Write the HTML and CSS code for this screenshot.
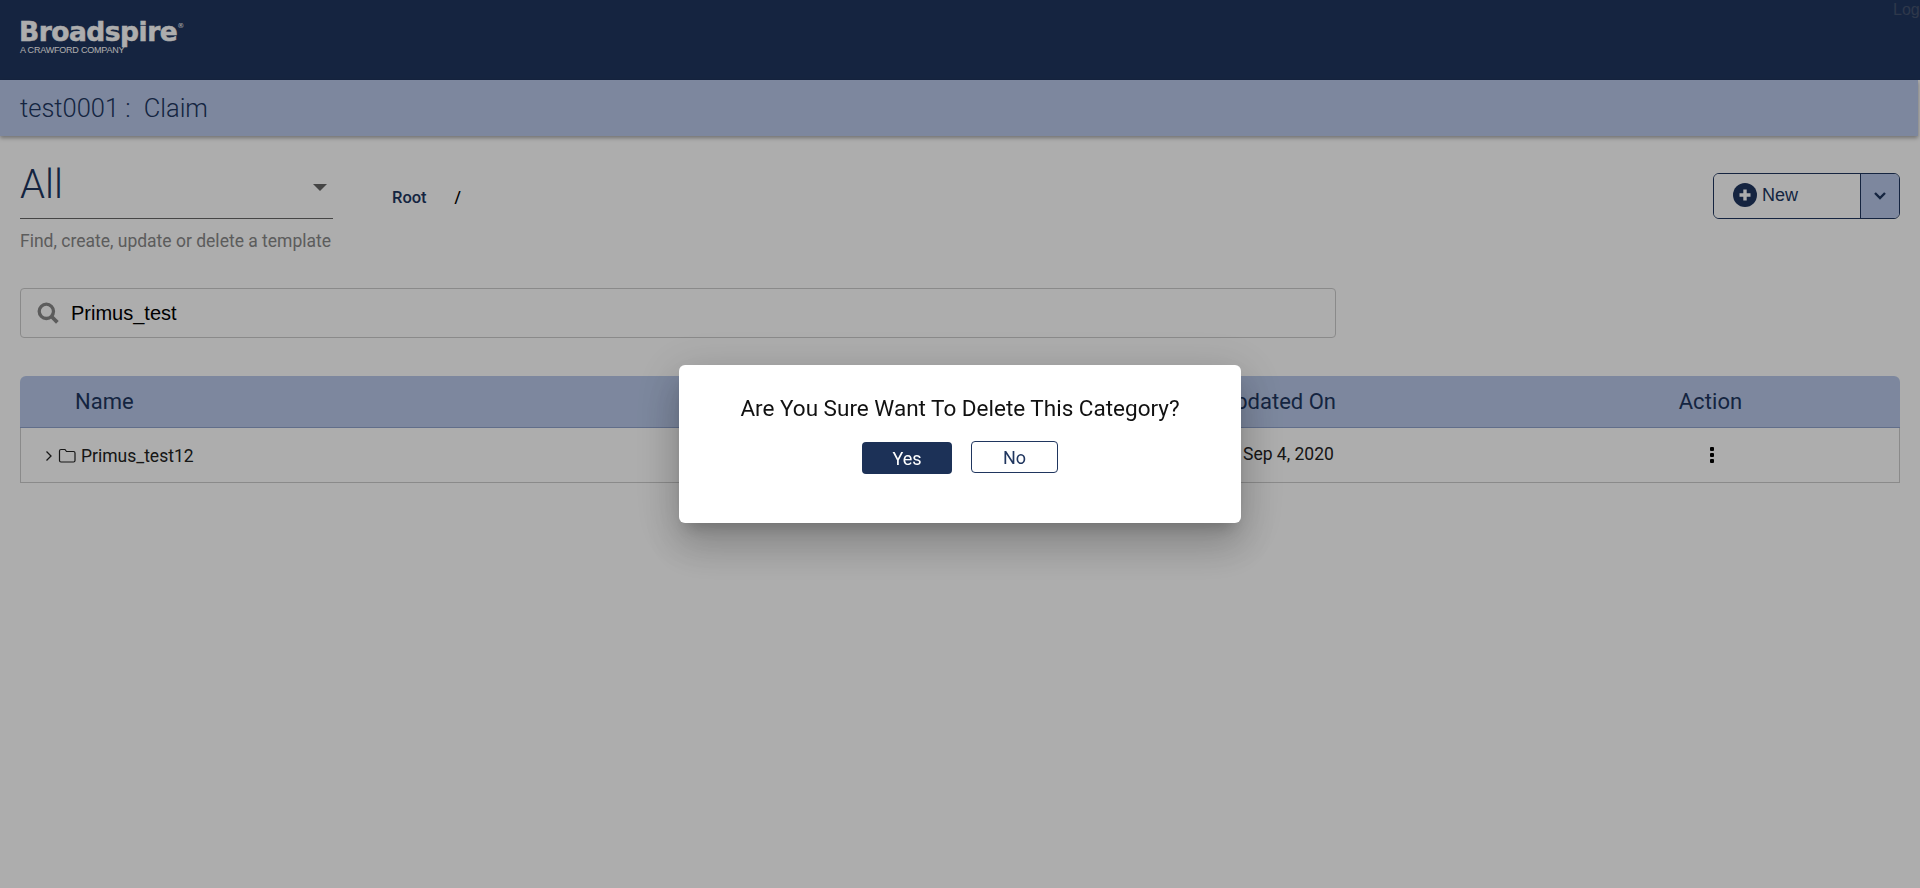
FILE: index.html
```html
<!DOCTYPE html>
<html lang="en">
<head>
<meta charset="utf-8">
<title>Broadspire</title>
<link rel="stylesheet" href="styles.css">
</head>
<body>
<header class="topbar">
  <div class="logo">
    <div class="logo-name">Broadspire<sup class="logo-reg">®</sup></div>
    <div class="logo-sub">A CRAWFORD COMPANY</div>
  </div>
  <a class="logout">Logout</a>
</header>
<div class="subbar"><span class="sub-id">test0001 :</span><span class="sub-type">Claim</span></div>
<main class="main">
  <section class="controls">
    <div class="picker">
      <div class="select"><span class="select-value">All</span><span class="select-arrow"></span></div>
      <p class="hint">Find, create, update or delete a template</p>
    </div>
    <nav class="crumbs"><span>Root</span><span class="crumb-sep">/</span></nav>
    <div class="split">
      <button class="split-main">
        <svg class="plus" viewBox="0 0 24 24" width="24" height="24"><circle cx="12" cy="12" r="12" fill="#20365f"/><path d="M12 6.500v11M6.500 12h11" stroke="#fff" stroke-width="3.400" fill="none"/></svg>
        <span>New</span>
      </button>
      <button class="split-toggle" aria-label="More">
        <svg viewBox="0 0 14 10" width="14" height="10"><path d="M2 2l5 5 5-5" stroke="#20365f" stroke-width="2.400" fill="none"/></svg>
      </button>
    </div>
  </section>
  <div class="search">
    <svg class="search-icon" viewBox="0 0 20 20" width="20" height="20"><circle cx="8.500" cy="8.500" r="6.500" stroke="#888" stroke-width="3" fill="none"/><path d="M13 13l5.500 5.500" stroke="#888" stroke-width="3.400" fill="none"/></svg>
    <span class="search-text">Primus_test</span>
  </div>
  <section class="table">
    <div class="thead">
      <div class="col-name">Name</div>
      <div class="col-date">Updated On</div>
      <div class="col-action">Action</div>
    </div>
    <div class="trow">
      <div class="cell-name">
        <svg viewBox="0 0 8 12" width="8" height="12"><path d="M1.500 1.500L6 6l-4.500 4.500" stroke="#222" stroke-width="1.300" fill="none"/></svg>
        <svg viewBox="0 0 18 15" width="18" height="15"><path d="M1.500 3V12.500Q1.500 14 3 14H15.500Q17 14 17 12.500V5Q17 3.500 15.500 3.500H8.500L7 1.500H3Q1.500 1.500 1.500 3Z" stroke="#222" stroke-width="1.200" fill="none"/></svg>
        <span>Primus_test12</span>
      </div>
      <div class="cell-date">Sep 4, 2020</div>
      <div class="cell-action"><span class="dots"><i></i><i></i><i></i></span></div>
    </div>
  </section>
</main>
<div class="overlay">
  <div class="dialog">
    <h2 class="dialog-title">Are You Sure Want To Delete This Category?</h2>
    <div class="dialog-actions">
      <button class="btn-yes">Yes</button>
      <button class="btn-no">No</button>
    </div>
  </div>
</div>
</body>
</html>
```
FILE: styles.css
```css
* { box-sizing: border-box; }
html, body { margin: 0; height: 100%; overflow: hidden; }
body { background: #fff; font-family: Roboto, "Liberation Sans", sans-serif; color: #20365f; }

.topbar { height: 80px; background: #20365f; display: flex; align-items: flex-start; justify-content: space-between; padding-left: 19px; }
.logo { margin-top: 17px; color: #fff; font-family: "Liberation Sans", sans-serif; }
.logo-name { font-family: "DejaVu Sans", sans-serif; font-weight: 700; font-size: 26.500px; line-height: 29px; width: 170px; white-space: nowrap; letter-spacing: -.5px; -webkit-text-stroke: .5px #fff; }
.logo-reg { font-size: 7px; line-height: 0; vertical-align: 13px; font-weight: 400; -webkit-text-stroke: 0; }
.logo-sub { font-size: 9px; line-height: 9px; margin-top: 0; letter-spacing: -.2px; padding-left: 1px; }
.logout { width: 27px; overflow: hidden; white-space: nowrap; font-family: "Liberation Sans", sans-serif; font-size: 16px; line-height: 20px; color: #45536f; }

.subbar { height: 56px; margin-right: 2px; background: #b8c8e9; box-shadow: 0 2px 4px rgba(0,0,0,.35); display: flex; align-items: center; padding-left: 20px; font-size: 25.500px; font-weight: 300; color: #20365f; }
.sub-type { margin-left: 13px; }

.main { padding: 26px 20px 0; }
.controls { display: flex; align-items: flex-start; height: 126px; }
.picker { width: 313px; }
.select { height: 57px; border-bottom: 1px solid #666; display: flex; align-items: flex-start; justify-content: space-between; padding-right: 6px; }
.select-value { font-size: 40px; font-weight: 300; line-height: 46px; }
.select-arrow { width: 0; height: 0; margin-top: 22px; border-left: 7px solid transparent; border-right: 7px solid transparent; border-top: 7px solid #666; }
.hint { margin: 10px 0 0; font-size: 17.500px; line-height: 24px; color: #888; white-space: nowrap; }
.crumbs { margin: 26px 0 0 59px; font-size: 16.500px; font-weight: 500; line-height: 20px; display: flex; gap: 28px; }
.crumb-sep { color: #000; font-weight: 500; }
.split { margin: 11px 0 0 auto; width: 187px; height: 46px; display: flex; border: 1px solid #20365f; border-radius: 6px; overflow: hidden; }
.split-main { flex: 1; background: #fff; border: 0; display: flex; align-items: center; gap: 5px; padding: 0 0 2px 19px; font-family: "Liberation Sans", sans-serif; font-size: 18px; color: #20365f; }
.split-toggle { width: 39px; background: #b8c8e9; border: 0; border-left: 1px solid #20365f; display: flex; align-items: center; justify-content: center; padding: 0; }

.search { width: 1316px; height: 50px; border: 1px solid #ccc; border-radius: 4px; display: flex; align-items: center; padding-left: 16px; gap: 12px; }
.search-icon { width: 22px; height: 22px; }
.search-text { font-family: "Liberation Sans", sans-serif; font-size: 20px; color: #000; }

.table { margin-top: 38px; }
.thead, .trow { display: grid; grid-template-columns: 1201px 300px 1fr; align-items: center; }
.thead { height: 52px; background: #b8c8e9; border-radius: 6px 6px 0 0; border-bottom: 1px solid #8fa3cc; font-size: 22px; }
.col-name { padding-left: 55px; }
.col-action { letter-spacing: .1px; }
.col-action, .cell-action { text-align: center; }
.trow { height: 55px; border: 1px solid #ccc; border-top: 0; color: #222; font-size: 17.500px; }
.cell-name { display: flex; align-items: center; gap: 5px; padding-left: 24px; padding-top: 2px; }
.cell-name svg:nth-child(2) { margin-top: -2px; }
.cell-date { padding: 0 0 3px 21px; }
.cell-action { padding: 0 0 3px 2px; }
.dots { display: inline-flex; flex-direction: column; gap: 2px; vertical-align: middle; }
.dots i { width: 4px; height: 4px; background: #000; border-radius: 1px; }

.overlay { position: fixed; inset: 0; background: rgba(0,0,0,.32); display: flex; align-items: center; justify-content: center; }
.dialog { width: 562px; height: 158px; background: #fff; border-radius: 6px; box-shadow: 0 11px 15px -7px rgba(0,0,0,.2), 0 24px 38px 3px rgba(0,0,0,.14), 0 9px 46px 8px rgba(0,0,0,.12); padding-top: 30px; text-align: center; }
.dialog-title { margin: 0; font-size: 22.500px; font-weight: 400; line-height: 26px; color: #111; }
.dialog-actions { margin-top: 20px; display: flex; justify-content: center; align-items: flex-start; gap: 19px; }
.btn-yes { width: 90px; height: 32px; margin-top: 1px; background: #1c3157; color: #fff; border: 0; border-radius: 4px; font-family: Roboto, sans-serif; font-size: 18px; font-weight: 400; }
.btn-no { width: 87px; height: 32px; background: #fff; color: #20365f; border: 1px solid #20365f; border-radius: 4px; font-family: Roboto, sans-serif; font-size: 18px; font-weight: 400; }
```
